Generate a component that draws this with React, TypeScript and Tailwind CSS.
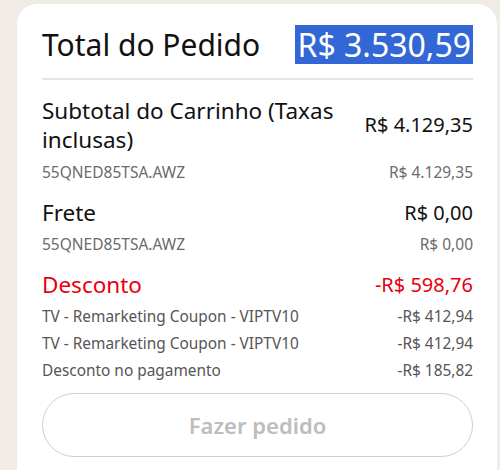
import React from "react";

export default function App() {
  return (
    <div
      className="min-h-[470px] bg-[#f0ebe4] pt-[4px] pl-[17px] overflow-hidden"
      style={{ fontFamily: '"Noto Sans", "Open Sans", sans-serif' }}
    >
      <div className="w-[480px] bg-white rounded-[20px] pl-[25px] pr-[24px] pt-[21px] pb-[30px] text-[#111]">
        <div className="flex justify-between items-center h-[39px]">
          <span className="text-[30px] leading-[39px]">Total do Pedido</span>
          <span className="inline-block h-[39px] bg-[#3467d6] text-white text-[32px] leading-[39px] px-[2px]">R$ 3.530,59</span>
        </div>
        <div className="mt-[14px] h-[2px] bg-[#e5e5e5]" />

        <div className="mt-[16px] flex justify-between items-center">
          <span className="text-[22.5px] leading-[29px] w-[310px]">Subtotal do Carrinho (Taxas inclusas)</span>
          <span className="text-[20px] leading-[28px]">R$ 4.129,35</span>
        </div>
        <div className="mt-[7px] flex justify-between text-[15.5px] leading-[22px] text-[#6b6b6b]">
          <span>55QNED85TSA.AWZ</span>
          <span>R$ 4.129,35</span>
        </div>

        <div className="mt-[16px] flex justify-between items-center">
          <span className="text-[22.5px] leading-[28px]">Frete</span>
          <span className="text-[20px] leading-[28px]">R$ 0,00</span>
        </div>
        <div className="mt-[6px] flex justify-between text-[15.5px] leading-[22px] text-[#6b6b6b]">
          <span>55QNED85TSA.AWZ</span>
          <span>R$ 0,00</span>
        </div>

        <div className="mt-[16px] flex justify-between items-center text-[#e60012]">
          <span className="text-[22.5px] leading-[28px]">Desconto</span>
          <span className="text-[20px] leading-[28px]">-R$ 598,76</span>
        </div>
        <div className="mt-[7px] flex flex-col gap-[5px] text-[15.4px] leading-[22px] text-[#555]">
          <div className="flex justify-between">
            <span>TV - Remarketing Coupon - VIPTV10</span>
            <span>-R$ 412,94</span>
          </div>
          <div className="flex justify-between">
            <span>TV - Remarketing Coupon - VIPTV10</span>
            <span>-R$ 412,94</span>
          </div>
          <div className="flex justify-between">
            <span>Desconto no pagamento</span>
            <span>-R$ 185,82</span>
          </div>
        </div>

        <button className="mt-[11px] w-full h-[64px] rounded-full border border-[#d0d0d0] bg-white text-[22px] font-semibold text-[#bdbdbd]">
          Fazer pedido
        </button>
      </div>
    </div>
  );
}
